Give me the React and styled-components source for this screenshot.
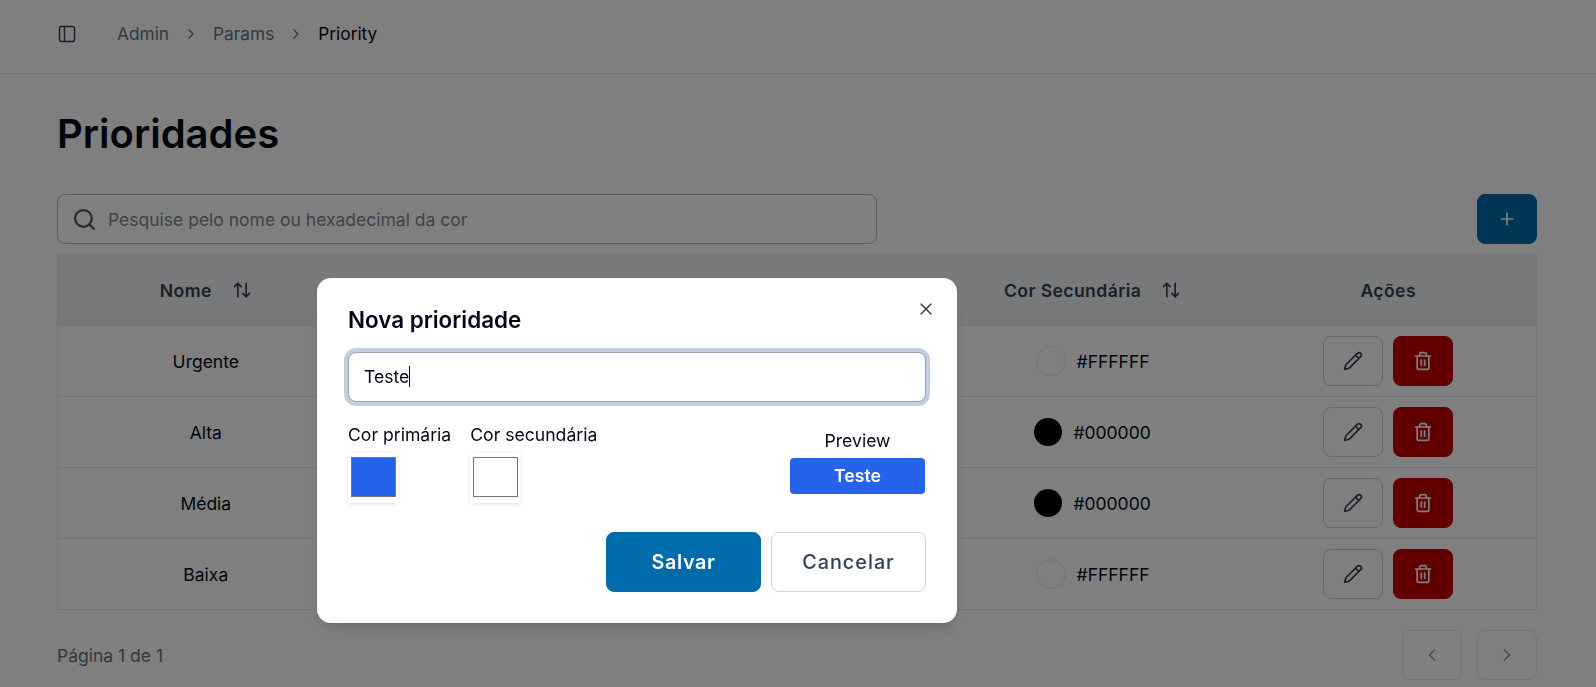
import React from 'react';
import styled, { createGlobalStyle } from 'styled-components';
import {
  ArrowUpDown,
  ChevronLeft,
  ChevronRight,
  PanelLeft,
  Pencil,
  Plus,
  Search,
  Trash2,
  X,
} from 'lucide-react';

const GlobalStyle = createGlobalStyle`
  * {
    box-sizing: border-box;
  }
  html, body {
    margin: 0;
    height: 100%;
    overflow: hidden;
    background: #fff;
    font-family: Inter, "Liberation Sans", sans-serif;
    color: #020817;
  }
`;

const Page = styled.div`
  height: 687px;
`;

const TopBar = styled.header`
  height: 74px;
  padding: 0 59px 6px 57px;
  display: flex;
  align-items: center;
  border-bottom: 1px solid #e2e8f0;
  color: #334155;
`;

const Crumbs = styled.nav`
  margin-left: 40px;
  display: flex;
  align-items: center;
  gap: 14px;
  font-size: 17.3px;
  color: #64748b;
`;

const Current = styled.span`
  color: #020817;
`;

const Content = styled.main`
  padding: 38px 59px 0 57px;
`;

const Title = styled.h1`
  margin: 0 0 38px;
  font-size: 40px;
  line-height: 44px;
  font-weight: 600;
  color: #020817;
`;

const ToolRow = styled.div`
  display: flex;
  justify-content: space-between;
  margin-bottom: 10px;
`;

const SearchBox = styled.label`
  width: 820px;
  height: 50px;
  padding: 0 14px;
  display: flex;
  align-items: center;
  gap: 9px;
  border: 1px solid #b4bfcc;
  border-radius: 8px;
  color: #475569;
`;

const SearchInput = styled.input`
  flex: 1;
  border: 0;
  outline: 0;
  background: transparent;
  font: 400 17.5px Inter, sans-serif;
  &::placeholder {
    color: #7b8794;
    opacity: 1;
  }
`;

const IconButton = styled.button`
  width: 60px;
  height: 50px;
  padding: 0;
  display: inline-flex;
  align-items: center;
  justify-content: center;
  border-radius: 8px;
  border: 1px solid ${(p) => p.$border || p.$bg || '#cbd5e1'};
  background: ${(p) => p.$bg || '#fff'};
  color: ${(p) => p.$color || '#334155'};
  opacity: ${(p) => (p.disabled ? 0.5 : 1)};
`;

const Table = styled.div`
  border: 1px solid #e2e8f0;
  border-bottom: 0;
`;

const Row = styled.div`
  display: grid;
  grid-template-columns: repeat(5, 1fr);
  height: 71px;
  border-bottom: 1px solid #e2e8f0;
  background: ${(p) => (p.$head ? '#eef2f6' : 'transparent')};
`;

const Cell = styled.div`
  display: flex;
  align-items: center;
  justify-content: center;
  gap: ${(p) => p.$gap || 10}px;
  font-size: 17.5px;
  color: #020817;
`;

const HeadLabel = styled.span`
  font-size: 17.6px;
  font-weight: 600;
  letter-spacing: 0.4px;
  color: #334155;
`;

const SortIcon = styled(ArrowUpDown)`
  margin-left: 10px;
  color: #334155;
`;

const Dot = styled.span`
  width: ${(p) => (p.$light ? 30 : 28)}px;
  height: ${(p) => (p.$light ? 30 : 28)}px;
  border-radius: 50%;
  background: ${(p) => p.$color};
  border: ${(p) => (p.$light ? '1px solid #e2e8f0' : '0')};
`;

const Footer = styled.div`
  margin-top: 20px;
  display: flex;
  justify-content: space-between;
  align-items: center;
  font-size: 17.5px;
  color: #64748b;
`;

const Pager = styled.div`
  display: flex;
  gap: 15px;
`;

const Overlay = styled.div`
  position: fixed;
  inset: 0;
  background: rgba(0, 0, 0, 0.5);
`;

const Modal = styled.section`
  position: absolute;
  left: 317px;
  top: 278px;
  width: 640px;
  height: 345px;
  padding: 28px 31px 0;
  border-radius: 14px;
  background: #fff;
  box-shadow: 0 10px 15px -3px rgba(0, 0, 0, 0.1), 0 4px 6px -4px rgba(0, 0, 0, 0.1);
`;

const CloseButton = styled.button`
  position: absolute;
  top: 21px;
  right: 21px;
  padding: 0;
  border: 0;
  background: none;
  display: flex;
  color: #334155;
`;

const ModalTitle = styled.h2`
  margin: 0 0 18px;
  font-size: 22.4px;
  line-height: 28px;
  font-weight: 600;
  color: #020817;
`;

const NameField = styled.div`
  position: relative;
  height: 50px;
`;

const NameInput = styled.input`
  width: 100%;
  height: 100%;
  padding: 0 15px 2px;
  border: 1px solid #94a3b8;
  border-radius: 8px;
  outline: 0;
  box-shadow: 0 0 0 4px #c3cfdf;
  font: 400 17.6px Inter, sans-serif;
  color: #020817;
  caret-color: transparent;
`;

const Caret = styled.span`
  position: absolute;
  left: 61px;
  top: 14px;
  width: 1px;
  height: 21px;
  background: #020817;
`;

const ColorRow = styled.div`
  margin-top: 21px;
  display: flex;
  align-items: flex-start;
`;

const ColorField = styled.div`
  margin-right: 19px;
`;

const ColorLabel = styled.div`
  font-size: 17.6px;
  line-height: 24px;
  margin-bottom: 6px;
  color: #020817;
`;

const SwatchBox = styled.div`
  width: 50px;
  height: 50px;
  padding: 4px 2px 5px 3px;
  background: #fff;
  box-shadow: 0 1px 4px rgba(0, 0, 0, 0.12);
`;

const ColorInput = styled.input`
  display: block;
  width: 45px;
  height: 40px;
  margin: 0;
  padding: 0;
  border: 0;
  background: none;
  &::-webkit-color-swatch-wrapper {
    padding: 0;
  }
  &::-webkit-color-swatch {
    border: 1px solid #767676;
    border-radius: 0;
  }
`;

const PreviewField = styled.div`
  margin-left: auto;
  margin-right: 1px;
  width: 135px;
  text-align: center;
  padding-top: 6px;
`;

const PreviewLabel = styled.div`
  font-size: 17.6px;
  line-height: 24px;
  margin-bottom: 5px;
  color: #020817;
`;

const PreviewBadge = styled.div`
  height: 36px;
  line-height: 36px;
  border-radius: 4px;
  font-size: 17.6px;
  font-weight: 600;
  background: ${(p) => p.$bg};
  color: ${(p) => p.$fg};
`;

const Actions = styled.div`
  margin-top: 29px;
  display: flex;
  justify-content: flex-end;
  gap: 10px;
`;

const ActionButton = styled.button`
  width: 155px;
  height: 60px;
  border-radius: 8px;
  border: 1px solid ${(p) => (p.$primary ? '#006bab' : '#cbd5e1')};
  background: ${(p) => (p.$primary ? '#006bab' : '#fff')};
  color: ${(p) => (p.$primary ? '#fff' : '#334155')};
  font: ${(p) => (p.$primary ? 600 : 500)} 19.8px Inter, sans-serif;
  letter-spacing: ${(p) => (p.$primary ? 0.6 : 1)}px;
`;

const rows = [
  { name: 'Urgente', color: '#FFFFFF' },
  { name: 'Alta', color: '#000000' },
  { name: 'Média', color: '#000000' },
  { name: 'Baixa', color: '#FFFFFF' },
];

function App() {
  return (
    <Page>
      <GlobalStyle />
      <TopBar>
        <PanelLeft size={20} strokeWidth={1.75} />
        <Crumbs>
          <span>Admin</span>
          <ChevronRight size={16} />
          <span>Params</span>
          <ChevronRight size={16} />
          <Current>Priority</Current>
        </Crumbs>
      </TopBar>
      <Content>
        <Title>Prioridades</Title>
        <ToolRow>
          <SearchBox>
            <Search size={25} strokeWidth={2.1} />
            <SearchInput placeholder="Pesquise pelo nome ou hexadecimal da cor" />
          </SearchBox>
          <IconButton $bg="#006bab" $color="#fff">
            <Plus size={20} />
          </IconButton>
        </ToolRow>
        <Table>
          <Row $head>
            <Cell>
              <HeadLabel>Nome</HeadLabel>
              <SortIcon size={20} />
            </Cell>
            <Cell />
            <Cell />
            <Cell>
              <HeadLabel>Cor Secundária</HeadLabel>
              <SortIcon size={20} />
            </Cell>
            <Cell>
              <HeadLabel>Ações</HeadLabel>
            </Cell>
          </Row>
          {rows.map((row) => (
            <Row key={row.name}>
              <Cell>{row.name}</Cell>
              <Cell />
              <Cell />
              <Cell $gap={11}>
                <Dot $color={row.color} $light={row.color === '#FFFFFF'} />
                {row.color}
              </Cell>
              <Cell>
                <IconButton>
                  <Pencil size={20} />
                </IconButton>
                <IconButton $bg="#c40000" $color="#fff">
                  <Trash2 size={20} />
                </IconButton>
              </Cell>
            </Row>
          ))}
        </Table>
        <Footer>
          <span>Página 1 de 1</span>
          <Pager>
            <IconButton disabled>
              <ChevronLeft size={20} />
            </IconButton>
            <IconButton disabled>
              <ChevronRight size={20} />
            </IconButton>
          </Pager>
        </Footer>
      </Content>
      <Overlay>
        <Modal>
          <CloseButton>
            <X size={20} strokeWidth={1.75} />
          </CloseButton>
          <ModalTitle>Nova prioridade</ModalTitle>
          <NameField>
            <NameInput defaultValue="Teste" readOnly />
            <Caret />
          </NameField>
          <ColorRow>
            <ColorField>
              <ColorLabel>Cor primária</ColorLabel>
              <SwatchBox>
                <ColorInput type="color" defaultValue="#2563eb" />
              </SwatchBox>
            </ColorField>
            <ColorField>
              <ColorLabel>Cor secundária</ColorLabel>
              <SwatchBox>
                <ColorInput type="color" defaultValue="#ffffff" />
              </SwatchBox>
            </ColorField>
            <PreviewField>
              <PreviewLabel>Preview</PreviewLabel>
              <PreviewBadge $bg="#2563eb" $fg="#ffffff">Teste</PreviewBadge>
            </PreviewField>
          </ColorRow>
          <Actions>
            <ActionButton $primary>Salvar</ActionButton>
            <ActionButton>Cancelar</ActionButton>
          </Actions>
        </Modal>
      </Overlay>
    </Page>
  );
}

export default App;
